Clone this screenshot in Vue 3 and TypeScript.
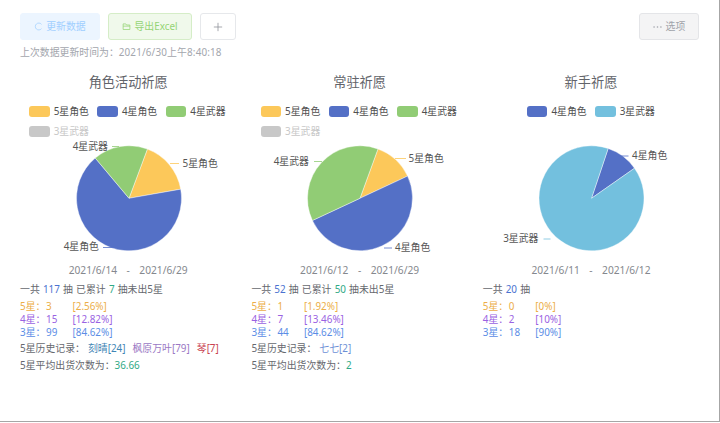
<script setup lang="ts">
interface Slice { color: string; from: number; to: number }
interface Label { text: string; x: number; y: number; anchor: string; line: string; color: string }
interface Entry { text: string; color: string }
interface Wish {
  title: string
  legend: { name: string; color: string; off?: boolean }[]
  cx: number
  slices: Slice[]
  labels: Label[]
  dates: [string, string]
  total: number
  since?: number
  rows: { star: string; count: number; pct: string; cls: string }[]
  history?: Entry[]
  avg?: string
}

const Y = '#fcc85a', B = '#5470c6', G = '#91cc75', C = '#73c0de', K = '#c8c8c8'
const R = 52.5, CY = 57.3

const wishes: Wish[] = [
  {
    title: '角色活动祈愿',
    legend: [
      { name: '5星角色', color: Y }, { name: '4星角色', color: B },
      { name: '4星武器', color: G }, { name: '3星武器', color: K, off: true },
    ],
    cx: 116,
    slices: [
      { color: Y, from: 20.5, to: 80 }, { color: B, from: 80, to: 320 }, { color: G, from: 320, to: 380.5 },
    ],
    labels: [
      { text: '5星角色', x: 169.5, y: 22, anchor: 'start', line: 'M157 22.5H166', color: Y },
      { text: '4星武器', x: 95, y: 5, anchor: 'end', line: 'M99 5.5H106', color: G },
      { text: '4星角色', x: 86, y: 105, anchor: 'end', line: 'M90 106.5H101', color: B },
    ],
    dates: ['2021/6/14', '2021/6/29'],
    total: 117,
    since: 7,
    rows: [
      { star: '5星', count: 3, pct: '2.56%', cls: 'gold' },
      { star: '4星', count: 15, pct: '12.82%', cls: 'violet' },
      { star: '3星', count: 99, pct: '84.62%', cls: 'azure' },
    ],
    history: [
      { text: '刻晴[24]', color: '#3f86b5' },
      { text: '枫原万叶[79]', color: '#9a78c4' },
      { text: '琴[7]', color: '#c9424f' },
    ],
    avg: '36.66',
  },
  {
    title: '常驻祈愿',
    legend: [
      { name: '5星角色', color: Y }, { name: '4星角色', color: B },
      { name: '4星武器', color: G }, { name: '3星武器', color: K, off: true },
    ],
    cx: 116,
    slices: [
      { color: Y, from: 20, to: 65 }, { color: B, from: 65, to: 245 }, { color: G, from: 245, to: 380 },
    ],
    labels: [
      { text: '5星角色', x: 164.5, y: 17, anchor: 'start', line: 'M151 17.5H162', color: Y },
      { text: '4星武器', x: 65, y: 19.5, anchor: 'end', line: 'M70 20.5H78', color: G },
      { text: '4星角色', x: 151, y: 105.5, anchor: 'start', line: 'M140 107H148', color: B },
    ],
    dates: ['2021/6/12', '2021/6/29'],
    total: 52,
    since: 50,
    rows: [
      { star: '5星', count: 1, pct: '1.92%', cls: 'gold' },
      { star: '4星', count: 7, pct: '13.46%', cls: 'violet' },
      { star: '3星', count: 44, pct: '84.62%', cls: 'azure' },
    ],
    history: [{ text: '七七[2]', color: '#6d8fd6' }],
    avg: '2',
  },
  {
    title: '新手祈愿',
    legend: [{ name: '4星角色', color: B }, { name: '3星武器', color: C }],
    cx: 116.5,
    slices: [
      { color: B, from: 18.5, to: 55 }, { color: C, from: 55, to: 378.5 },
    ],
    labels: [
      { text: '4星角色', x: 157, y: 14, anchor: 'start', line: 'M143.5 15H153.5', color: B },
      { text: '3星武器', x: 63.5, y: 97, anchor: 'end', line: 'M68.5 98H75.5', color: C },
    ],
    dates: ['2021/6/11', '2021/6/12'],
    total: 20,
    rows: [
      { star: '5星', count: 0, pct: '0%', cls: 'gold' },
      { star: '4星', count: 2, pct: '10%', cls: 'violet' },
      { star: '3星', count: 18, pct: '90%', cls: 'azure' },
    ],
  },
]

function slicePath(cx: number, s: Slice): string {
  const pt = (deg: number) => {
    const a = (deg * Math.PI) / 180
    return `${(cx + R * Math.sin(a)).toFixed(2)} ${(CY - R * Math.cos(a)).toFixed(2)}`
  }
  const large = s.to - s.from > 180 ? 1 : 0
  return `M${cx} ${CY}L${pt(s.from)}A${R} ${R} 0 ${large} 1 ${pt(s.to)}Z`
}
</script>

<template>
  <div class="page">
    <div class="toolbar">
      <button class="btn refresh">
        <svg class="ico" viewBox="0 0 12 12"><path d="M10 3.2A4.6 4.6 0 1 0 10 8.8" fill="none" stroke="currentColor" stroke-width="1" /></svg>
        更新数据
      </button>
      <button class="btn export">
        <svg class="ico" viewBox="0 0 12 12"><path d="M1.5 10V2.5H5L6 4H10.5V10ZM1.5 5.5H10.5" fill="none" stroke="currentColor" stroke-width="1" /></svg>
        导出Excel
      </button>
      <button class="btn plus">
        <svg class="plus-ico" viewBox="0 0 12 12"><path d="M6 1V11M1 6H11" fill="none" stroke="currentColor" stroke-width="0.9" /></svg>
      </button>
      <button class="btn options">
        <svg class="dots" viewBox="0 0 10 4"><circle cx="1.2" cy="2" r="0.9" /><circle cx="5" cy="2" r="0.9" /><circle cx="8.8" cy="2" r="0.9" /></svg>
        选项
      </button>
    </div>
    <p class="updated">上次数据更新时间为：<span class="stamp">2021/6/30上午8:40:18</span></p>

    <div class="columns">
      <section v-for="w in wishes" :key="w.title" class="col">
        <h2 class="title">{{ w.title }}</h2>
        <ul class="legend">
          <li v-for="l in w.legend" :key="l.name" class="legend-item" :class="{ off: l.off }">
            <i class="swatch" :style="{ background: l.color }"></i>{{ l.name }}
          </li>
        </ul>
        <svg class="pie" viewBox="0 -8 231 123" width="231" height="123">
          <path v-for="s in w.slices" :key="s.from" :d="slicePath(w.cx, s)" :fill="s.color" stroke="#fff" stroke-width="0.4" />
          <g v-for="l in w.labels" :key="l.text">
            <path :d="l.line" :stroke="l.color" stroke-width="0.8" fill="none" />
            <text :x="l.x" :y="l.y" :text-anchor="l.anchor" dominant-baseline="central" class="pie-label">{{ l.text }}</text>
          </g>
        </svg>
        <div class="dates"><span>{{ w.dates[0] }}</span><span>-</span><span>{{ w.dates[1] }}</span></div>

        <div class="stats">
          <p class="summary">
            一共 <b class="n-blue">{{ w.total }}</b> 抽
            <template v-if="w.since !== undefined">
              已累计 <b class="n-green">{{ w.since }}</b> 抽未出5星
            </template>
          </p>
          <div class="rows">
            <div v-for="r in w.rows" :key="r.star" class="row" :class="r.cls">
              <span class="star">{{ r.star }}：</span><span class="count">{{ r.count }}</span><span>[{{ r.pct }}]</span>
            </div>
          </div>
          <p v-if="w.history" class="history">
            5星历史记录：<span v-for="h in w.history" :key="h.text" class="entry" :style="{ color: h.color }">{{ h.text }}</span>
          </p>
          <p v-if="w.avg" class="avg">5星平均出货次数为：<b class="n-teal">{{ w.avg }}</b></p>
        </div>
      </section>
    </div>
  </div>
</template>

<style scoped>
.page {
  box-sizing: border-box;
  width: 720px;
  height: 422px;
  padding: 13px 20px 0;
  border-right: 1px solid #a6a6a6;
  border-bottom: 1px solid #a6a6a6;
  background: #fff;
  color: #66686e;
  font: 9.9px/13px "Noto Sans", "Noto Sans CJK SC", sans-serif;
  overflow: hidden;
}
.toolbar { display: flex; gap: 8px; height: 27px; }
.btn {
  display: flex;
  align-items: center;
  justify-content: center;
  gap: 3px;
  box-sizing: border-box;
  height: 27px;
  padding: 0;
  border: 1px solid #dcdfe6;
  border-radius: 3px;
  background: #fff;
  font: inherit;
}
.ico { width: 9px; height: 9px; }
.refresh { width: 80px; background: #ecf5ff; border-color: #ecf5ff; color: #a0cfff; }
.export { width: 84px; background: #f0f9eb; border-color: #d5edc7; color: #95d475; }
.plus { width: 36px; color: #8a8d93; border-color: #e6e8eb; }
.plus-ico { width: 10px; height: 10px; }
.options { width: 60px; margin-left: auto; gap: 4px; background: #f4f4f5; border-color: #e4e5e8; color: #a0a3aa; }
.dots { width: 9px; height: 4px; fill: currentColor; }
.updated { margin: 6px 0 0; color: #a3a6ad; line-height: 13px; }
.stamp { letter-spacing: 0.15px; }
.columns { display: grid; grid-template-columns: repeat(3, 231.4px); margin: 13px 0 0 -7.5px; }
.col { min-width: 0; }
.title {
  margin: 0;
  text-align: center;
  font-size: 13.2px;
  font-weight: 400;
  line-height: 20px;
  color: #62646a;
}
.legend {
  display: flex;
  flex-wrap: wrap;
  align-content: flex-start;
  gap: 8px 8.5px;
  width: fit-content;
  max-width: 198px;
  height: 32px;
  margin: 13.5px auto 0;
  padding: 0;
  list-style: none;
}
.legend-item { display: flex; align-items: center; height: 12px; color: #505050; white-space: nowrap; }
.legend-item.off { color: #c8c8c8; }
.swatch { width: 20.5px; height: 11.5px; margin-right: 4px; border-radius: 3px; }
.pie { display: block; margin-top: -4.5px; }
.pie-label { font-size: 9.9px; fill: #565656; }
.dates {
  display: flex;
  justify-content: center;
  gap: 9.5px;
  margin-top: 7.5px;
  color: #85888e;
  font-size: 10.2px;
}
.stats { padding-left: 7.5px; margin-top: 6.5px; }
.stats p { margin: 0; }
.stats b { font-weight: 400; }
.summary { word-spacing: 0.6px; }
.n-blue { color: #4a72d0; }
.n-green { color: #2fa985; }
.n-teal { color: #2fa985; }
.rows { margin-top: 3.5px; }
.row { display: flex; height: 13.3px; align-items: center; }
.star { width: 26px; }
.count { width: 26.5px; }
.gold { color: #ecae47; }
.violet { color: #9a62e2; }
.azure { color: #5b8de6; }
.history { margin-top: 3px !important; }
.entry { margin-right: 7px; }
.entry:first-child { margin-left: 3px; }
.avg { margin-top: 3.5px !important; }
</style>

<style>
html, body { margin: 0; background: #fff; }
</style>
